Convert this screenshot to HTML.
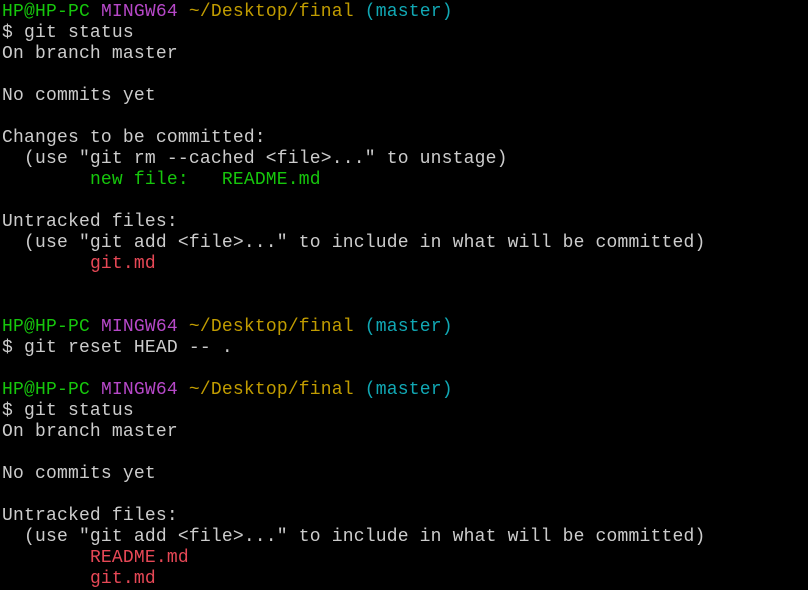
<!DOCTYPE html>
<html><head><meta charset="utf-8"><style>
html,body{margin:0;padding:0;background:#000;width:808px;height:590px;overflow:hidden}
pre{margin:0;padding:2px 0 0 2px;font-family:"Liberation Mono",monospace;font-size:18px;line-height:21px;color:#cccccc;letter-spacing:0.19px;white-space:pre}
.g{color:#16c60c}.m{color:#b648c8}.y{color:#c19c00}.c{color:#11a8b4}.r{color:#e74856}
</style></head><body><pre><span class="g">HP@HP-PC</span> <span class="m">MINGW64</span> <span class="y">~/Desktop/final</span> <span class="c">(master)</span>
$ git status
On branch master

No commits yet

Changes to be committed:
  (use "git rm --cached &lt;file&gt;..." to unstage)
        <span class="g">new file:   README.md</span>

Untracked files:
  (use "git add &lt;file&gt;..." to include in what will be committed)
        <span class="r">git.md</span>


<span class="g">HP@HP-PC</span> <span class="m">MINGW64</span> <span class="y">~/Desktop/final</span> <span class="c">(master)</span>
$ git reset HEAD -- .

<span class="g">HP@HP-PC</span> <span class="m">MINGW64</span> <span class="y">~/Desktop/final</span> <span class="c">(master)</span>
$ git status
On branch master

No commits yet

Untracked files:
  (use "git add &lt;file&gt;..." to include in what will be committed)
        <span class="r">README.md</span>
        <span class="r">git.md</span>
</pre></body></html>
